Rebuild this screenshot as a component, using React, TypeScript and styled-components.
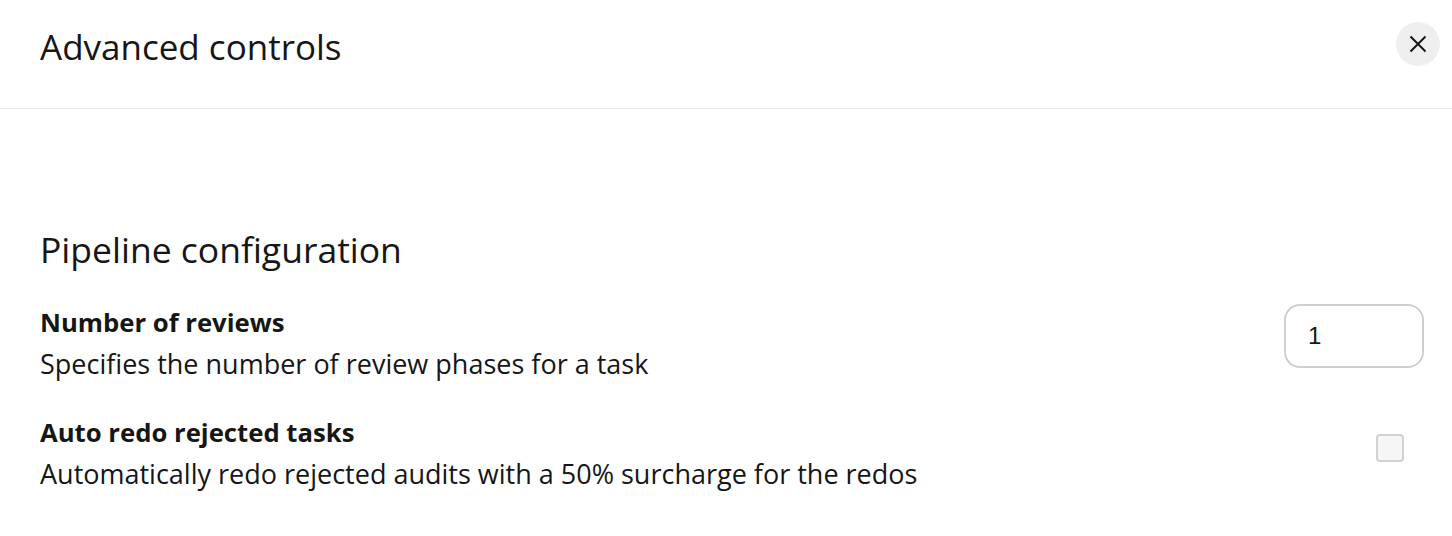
import React from "react";
import styled, { createGlobalStyle } from "styled-components";

const Global = createGlobalStyle`
  html, body { margin: 0; padding: 0; background: #fff; }
  body { font-family: "Open Sans", "Noto Sans", sans-serif; color: #161616; }
  * { box-sizing: border-box; }
`;

const Page = styled.div`
  width: 1452px;
  height: 536px;
  display: flex;
  flex-direction: column;
  background: #fff;
`;

const Header = styled.header`
  height: 109px;
  flex-shrink: 0;
  border-bottom: 1px solid #ececec;
  display: flex;
  align-items: center;
  justify-content: space-between;
  padding: 0 12px 16px 40px;
`;

const Title = styled.h1`
  margin: 0;
  font-size: 35px;
  font-weight: 400;
  line-height: 1;
  color: #161616;
`;

const CloseButton = styled.button`
  width: 44px;
  height: 44px;
  border-radius: 50%;
  border: none;
  background: #efefef;
  display: flex;
  align-items: center;
  justify-content: center;
  padding: 0;
  cursor: pointer;
  margin-bottom: 5px;
`;

const Body = styled.main`
  padding: 118px 28px 0 40px;
  display: flex;
  flex-direction: column;
`;

const SectionTitle = styled.h2`
  margin: 0 0 36px;
  font-size: 35.5px;
  font-weight: 500;
  line-height: 44px;
  color: #161616;
`;

const SettingRow = styled.div`
  display: flex;
  justify-content: space-between;
  align-items: flex-start;
  margin-bottom: 37px;
`;

const SettingText = styled.div`
  display: flex;
  flex-direction: column;
  gap: 9px;
`;

const Label = styled.div`
  font-size: 25.7px;
  font-weight: 700;
  line-height: 32px;
`;

const Description = styled.div`
  font-size: 27px;
  font-weight: 400;
  line-height: 32px;
`;

const NumberInput = styled.input`
  width: 140px;
  height: 64px;
  margin-top: -3px;
  border: 2px solid #cfcfcf;
  border-radius: 16px;
  padding: 0 22px;
  font-family: "Liberation Sans", Arial, sans-serif;
  font-size: 24px;
  color: #161616;
  outline: none;
  background: #fff;
`;

const Checkbox = styled.span`
  width: 28px;
  height: 28px;
  margin-top: 17px;
  margin-right: 20px;
  border: 2px solid #d2d2d2;
  border-radius: 4px;
  background: #f6f6f6;
  display: inline-block;
`;

export default function App() {
  return (
    <>
      <Global />
      <Page>
        <Header>
          <Title>Advanced controls</Title>
          <CloseButton aria-label="Close">
            <svg width="18" height="18" viewBox="0 0 18 18">
              <path d="M1.5 1.5L16.5 16.5M16.5 1.5L1.5 16.5" stroke="#161616" strokeWidth="2" />
            </svg>
          </CloseButton>
        </Header>
        <Body>
          <SectionTitle>Pipeline configuration</SectionTitle>
          <SettingRow>
            <SettingText>
              <Label>Number of reviews</Label>
              <Description>Specifies the number of review phases for a task</Description>
            </SettingText>
            <NumberInput type="text" defaultValue="1" />
          </SettingRow>
          <SettingRow>
            <SettingText>
              <Label>Auto redo rejected tasks</Label>
              <Description>Automatically redo rejected audits with a 50% surcharge for the redos</Description>
            </SettingText>
            <Checkbox />
          </SettingRow>
        </Body>
      </Page>
    </>
  );
}
